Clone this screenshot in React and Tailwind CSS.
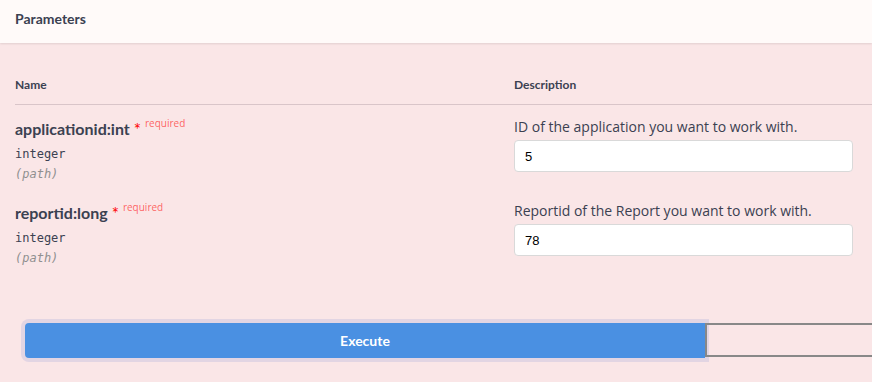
import React from 'react';

const params = [
  { name: 'applicationid:int', type: 'integer', place: '(path)', desc: 'ID of the application you want to work with.', value: '5' },
  { name: 'reportid:long', type: 'integer', place: '(path)', desc: 'Reportid of the Report you want to work with.', value: '78' },
];

function ParamRow({ p }) {
  return (
    <div className="grid grid-cols-[499px_1fr] h-[84px]">
      <div className="pt-[14px]">
        <div className="flex items-start text-[16px] leading-[20px] font-bold text-[#3b4151] font-['Lato','Noto_Sans',sans-serif]">
          {p.name}
          <span className="ml-[4px] mt-[1px] text-[red] text-[17px] leading-[20px] font-normal">*</span>
          <span className="ml-[4px] -mt-[6px] text-[10px] font-normal text-[rgba(255,0,0,0.6)] font-['Open_Sans',sans-serif]">required</span>
        </div>
        <div className="mt-[4px] text-[12px] leading-[20px] text-[#3b4151] font-['DejaVu_Sans_Mono',monospace]">{p.type}</div>
        <div className="text-[12px] leading-[20px] italic text-[#909090] font-['DejaVu_Sans_Mono',monospace]">{p.place}</div>
      </div>
      <div className="pt-[12px]">
        <div className="text-[14px] leading-[20px] text-[#3b4151] font-['Open_Sans',sans-serif]">{p.desc}</div>
        <input
          readOnly
          value={p.value}
          className="mt-[3px] w-[339px] h-[32px] px-[10px] bg-white border border-[#d9d9d9] rounded-[4px] text-[13px] text-black font-['Liberation_Sans',Arial,sans-serif] outline-none"
        />
      </div>
    </div>
  );
}

export default function App() {
  return (
    <div className="w-[872px] h-[382px] overflow-hidden bg-[#fae6e7]">
      <div className="h-[43px] bg-[#fffaf9] shadow-[0_1px_2px_rgba(0,0,0,0.1)] px-[15px] pt-[10px] relative">
        <h4 className="text-[14px] leading-[18px] font-bold text-[#3b4151] font-['Lato','Noto_Sans',sans-serif]">Parameters</h4>
      </div>

      <div className="pl-[15px]">
        <div className="grid grid-cols-[499px_1fr] mt-[34px] pb-[11px] border-b border-[#d9c5c9] text-[12px] leading-[16px] font-bold text-[#3b4151] font-['Lato','Noto_Sans',sans-serif]">
          <div>Name</div>
          <div>Description</div>
        </div>
        {params.map((p) => (
          <ParamRow key={p.name} p={p} />
        ))}
      </div>

      <div className="flex mt-[50px] pl-[25px]">
        <button className="shrink-0 w-[680px] h-[35px] bg-[#4a90e2] rounded-l-[4px] shadow-[0_0_0_4px_rgba(180,180,220,0.35)] text-white text-[14px] font-bold font-['Lato','Noto_Sans',sans-serif]">
          Execute
        </button>
        <button className="shrink-0 w-[680px] h-[34px] border-2 border-[#888888] bg-transparent"></button>
      </div>
    </div>
  );
}
